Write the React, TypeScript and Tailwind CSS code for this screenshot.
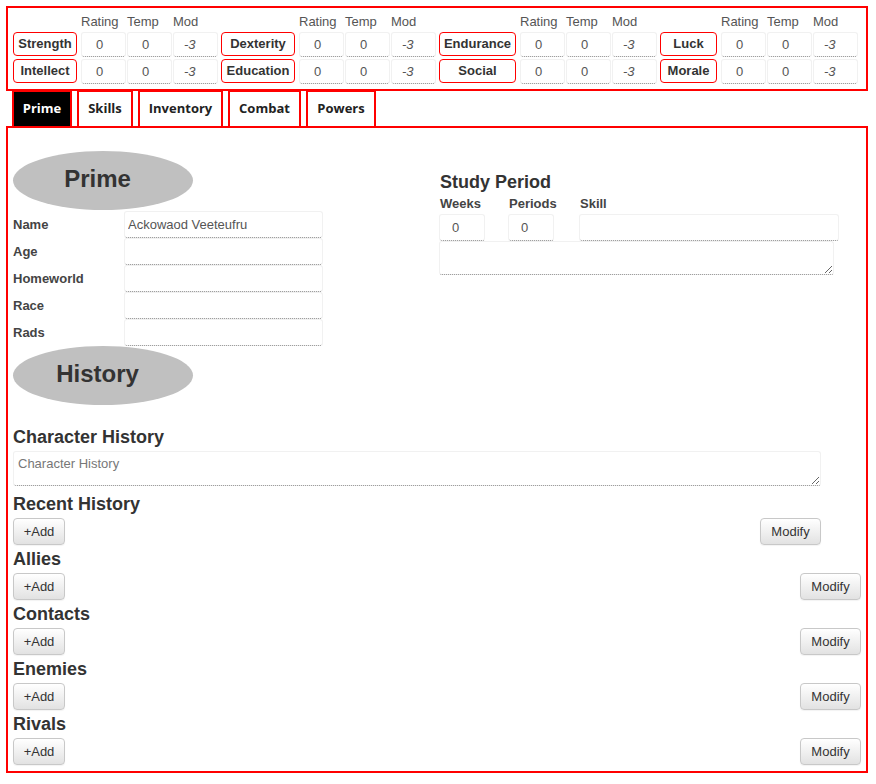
import React from 'react'

const groups = [
  { w: 'w-[64px]', rows: ['Strength', 'Intellect'] },
  { w: 'w-[74px]', rows: ['Dexterity', 'Education'] },
  { w: 'w-[77px]', rows: ['Endurance', 'Social'] },
  { w: 'w-[57px]', rows: ['Luck', 'Morale'] },
]

const tabs = [
  { name: 'Prime', w: 'w-[60px]', active: true },
  { name: 'Skills', w: 'w-[56px]', active: false },
  { name: 'Inventory', w: 'w-[85px]', active: false },
  { name: 'Combat', w: 'w-[73px]', active: false },
  { name: 'Powers', w: 'w-[70px]', active: false },
]

const field =
  'bg-white border border-[#f1f1f1] border-b-[#8a8a8a] [border-bottom-style:dotted] rounded-[3px] text-[13px] text-[#555] outline-none'

const btn =
  'h-[27px] rounded-[4px] border border-[#c8c8c8] bg-linear-to-b from-white to-[#e2e2e2] text-[13px] text-[#333] shadow-[0_1px_1px_rgba(0,0,0,0.05)]'

function StatGroup({ w, rows }: { w: string; rows: string[] }) {
  return (
    <div className="flex flex-col">
      <div className="flex h-[16px] gap-[1px] text-[13px] leading-[16px] text-[#555]">
        <div className={`${w} mr-[3px]`} />
        <div className="w-[45px]">Rating</div>
        <div className="w-[45px]">Temp</div>
        <div className="w-[45px]">Mod</div>
      </div>
      {rows.map((r) => (
        <div key={r} className="mt-[2px] flex gap-[1px]">
          <div
            className={`${w} mr-[3px] h-[24px] rounded-[4px] border border-[#f00] text-center text-[13px] font-bold leading-[22px] text-[#333]`}
          >
            {r}
          </div>
          <input readOnly defaultValue="0" className={`${field} h-[25px] w-[45px] pl-[14px]`} />
          <input readOnly defaultValue="0" className={`${field} h-[25px] w-[45px] pl-[14px]`} />
          <input readOnly defaultValue="-3" className={`${field} h-[25px] w-[45px] pl-[10px] italic`} />
        </div>
      ))}
    </div>
  )
}

function Oval({ title }: { title: string }) {
  return (
    <div className="flex h-[59px] w-[180px] items-center justify-center rounded-[50%] bg-[#c0c0c0] pr-[11px] pb-[4px] text-[24px] font-bold text-[#333]">
      {title}
    </div>
  )
}

function ListSection({ title }: { title: string }) {
  return (
    <div className="mt-[1px]">
      <h3 className="h-[25px] text-[18px] font-bold leading-[26px] text-[#333]">{title}</h3>
      <div className="mt-[2px] flex justify-between">
        <button className={`${btn} w-[52px]`}>+Add</button>
        <button className={`${btn} w-[61px]`}>Modify</button>
      </div>
    </div>
  )
}

export default function App() {
  const prime = [
    ['Name', 'Ackowaod Veeteufru'],
    ['Age', ''],
    ['Homeworld', ''],
    ['Race', ''],
    ['Rads', ''],
  ]

  return (
    <div className="ml-[6px] mt-[6px] w-[862px] font-['Liberation_Sans',Arial,sans-serif]">
      <div className="flex h-[85px] gap-[3px] border-2 border-[#f00] pl-[5px] pt-[6px]">
        {groups.map((g) => (
          <StatGroup key={g.w} w={g.w} rows={g.rows} />
        ))}
      </div>

      <div className="relative z-10 -mt-[1px] ml-[6px] flex gap-[5px]">
        {tabs.map((t) => (
          <div
            key={t.name}
            className={`${t.w} flex h-[38px] items-center justify-center border-2 border-[#f00] font-['Open_Sans',sans-serif] text-[13px] font-bold ${
              t.active ? 'bg-black text-white' : 'bg-white text-[#222]'
            }`}
          >
            {t.name}
          </div>
        ))}
      </div>

      <div className="-mt-[2px] h-[647px] border-2 border-[#f00] px-[5px]">
        <div className="grid grid-cols-[426px_1fr]">
          <div className="pt-[23px]">
            <Oval title="Prime" />
            <div className="mt-[1px]">
              {prime.map(([label, val]) => (
                <div key={label} className="flex h-[27px] items-center">
                  <div className="w-[111px] text-[13px] font-bold text-[#444]">{label}</div>
                  <input readOnly defaultValue={val} className={`${field} h-[27px] w-[199px] pl-[3px]`} />
                </div>
              ))}
            </div>
          </div>

          <div className="pt-[42px]">
            <h3 className="h-[25px] pl-[1px] text-[18px] font-bold leading-[25px] text-[#333]">Study Period</h3>
            <div className="mt-[1px] grid grid-cols-[69px_71px_260px] text-[13px] font-bold leading-[16px] text-[#444]">
              <div className="pl-[1px]">Weeks</div>
              <div className="pl-[1px]">Periods</div>
              <div className="pl-[1px]">Skill</div>
            </div>
            <div className="mt-[2px] grid grid-cols-[69px_71px_260px]">
              <input readOnly defaultValue="0" className={`${field} h-[27px] w-[46px] pl-[12px]`} />
              <input readOnly defaultValue="0" className={`${field} h-[27px] w-[46px] pl-[12px]`} />
              <input readOnly defaultValue="" className={`${field} h-[27px] w-[260px]`} />
            </div>
            <textarea readOnly className={`${field} block h-[34px] w-[395px]`} />
          </div>
        </div>

        <Oval title="History" />

        <h3 className="mt-[20px] h-[25px] text-[18px] font-bold leading-[25px] text-[#333]">Character History</h3>
        <textarea
          readOnly
          placeholder="Character History"
          className={`${field} mt-[1px] block h-[35px] w-[808px] px-[4px] pt-[2px] placeholder:text-[#777]`}
        />

        <div className="mt-[5px] w-[808px]">
          <h3 className="h-[25px] text-[18px] font-bold leading-[26px] text-[#333]">Recent History</h3>
          <div className="mt-[2px] flex justify-between">
            <button className={`${btn} w-[52px]`}>+Add</button>
            <button className={`${btn} w-[61px]`}>Modify</button>
          </div>
        </div>

        <ListSection title="Allies" />
        <ListSection title="Contacts" />
        <ListSection title="Enemies" />
        <ListSection title="Rivals" />
      </div>
    </div>
  )
}
